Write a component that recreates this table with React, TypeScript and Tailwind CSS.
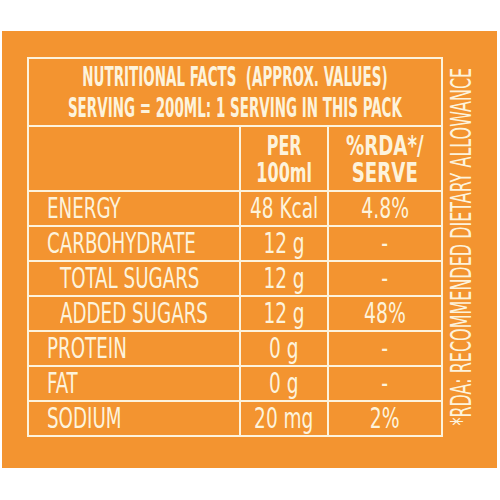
import { FC } from 'react';

const rows = [
  { label: 'ENERGY', per: '48 Kcal', rda: '4.8%', indent: false },
  { label: 'CARBOHYDRATE', per: '12 g', rda: '-', indent: false },
  { label: 'TOTAL SUGARS', per: '12 g', rda: '-', indent: true },
  { label: 'ADDED SUGARS', per: '12 g', rda: '48%', indent: true },
  { label: 'PROTEIN', per: '0 g', rda: '-', indent: false },
  { label: 'FAT', per: '0 g', rda: '-', indent: false },
  { label: 'SODIUM', per: '20 mg', rda: '2%', indent: false },
];

const font = "font-['DejaVu_Sans_Condensed','DejaVu_Sans','Liberation_Sans',sans-serif]";

const App: FC = () => {
  return (
    <div className={`w-[500px] h-[500px] bg-white pt-[31px] pl-[2px] text-[#fdf3dc] ${font}`}>
      <div className="w-[495px] h-[437px] bg-[#f39430] flex pl-[25px] pt-[26px]">
        <div className="w-[416px] h-[380px] border-2 border-[#fdf3dc] flex flex-col">
          {/* title */}
          <div className="h-[68px] border-b-2 border-[#fdf3dc] flex items-center justify-center font-bold text-[27px] leading-[31px]">
            <span className="inline-block whitespace-pre text-center scale-x-[0.555] origin-center">
              {'NUTRITIONAL FACTS  (APPROX. VALUES)\nSERVING = 200ML: 1 SERVING IN THIS PACK'}
            </span>
          </div>

          {/* column headings */}
          <div className="h-[65px] border-b-2 border-[#fdf3dc] grid grid-cols-[212px_88px_1fr] font-bold text-[27px] leading-[27px]">
            <div className="border-r-2 border-[#fdf3dc]" />
            <div className="border-r-2 border-[#fdf3dc] flex items-center justify-center">
              <span className="inline-block whitespace-pre text-center scale-x-[0.66] origin-center">{'PER\n100ml'}</span>
            </div>
            <div className="flex items-center justify-center">
              <span className="inline-block whitespace-pre text-center scale-x-[0.75] origin-center">{'%RDA*/\nSERVE'}</span>
            </div>
          </div>

          {rows.map((r, i) => (
            <div
              key={r.label}
              className={`grid grid-cols-[212px_88px_1fr] text-[29px] leading-none ${i < rows.length - 1 ? 'h-[35px] border-b-2 border-[#fdf3dc]' : 'h-[33px]'}`}
            >
              <div className={`border-r-2 border-[#fdf3dc] flex items-center ${r.indent ? 'pl-[31px]' : 'pl-[18px]'}`}>
                <span className="inline-block whitespace-nowrap scale-x-[0.70] origin-left">{r.label}</span>
              </div>
              <div className="border-r-2 border-[#fdf3dc] flex items-center justify-center">
                <span className="inline-block whitespace-nowrap scale-x-[0.71] origin-center">{r.per}</span>
              </div>
              <div className="flex items-center justify-center">
                <span className="inline-block whitespace-nowrap scale-x-[0.72] origin-center">{r.rda}</span>
              </div>
            </div>
          ))}
        </div>

        {/* side note */}
        <div className="w-[37px] h-[380px] flex items-center justify-center">
          <span className="inline-block whitespace-nowrap text-[28px] leading-none [writing-mode:vertical-rl] rotate-180 scale-y-[0.635]">
            *RDA: RECOMMENDED DIETARY ALLOWANCE
          </span>
        </div>
      </div>
    </div>
  );
};

export default App;
